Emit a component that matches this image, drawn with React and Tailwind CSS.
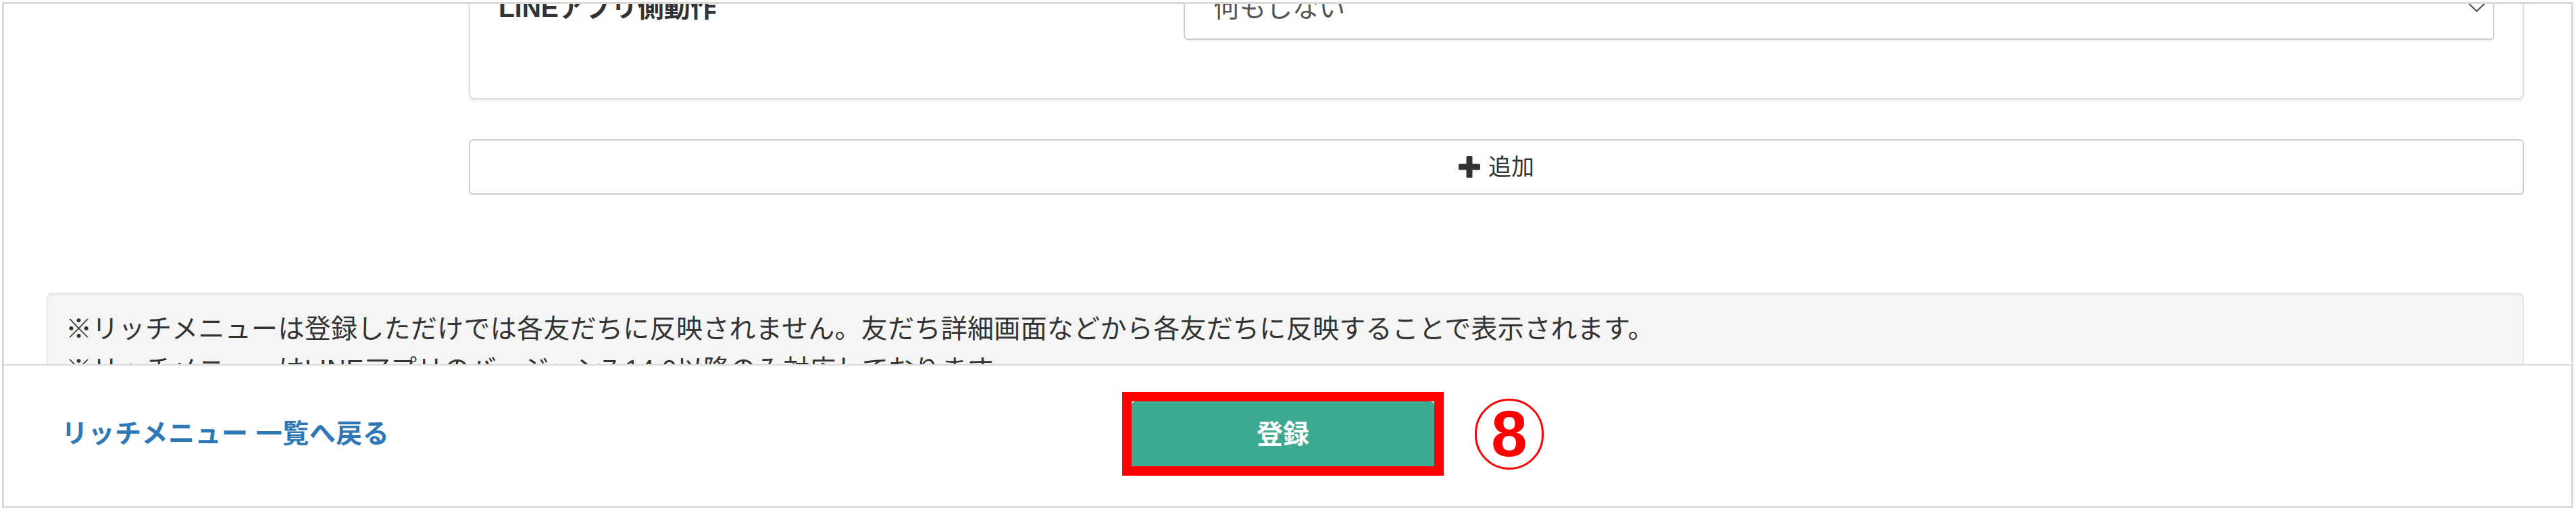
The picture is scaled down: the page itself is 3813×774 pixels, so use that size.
import React from "react";

function Chevron() {
  return (
    <svg width="26" height="14" viewBox="0 0 26 14" className="shrink-0">
      <polyline points="1,1 13,12.5 25,1" fill="none" stroke="#555" strokeWidth="2.2" />
    </svg>
  );
}

function PlusIcon() {
  return (
    <svg width="32" height="32" viewBox="0 0 32 32" className="shrink-0">
      <rect x="11.5" y="0" width="9" height="32" rx="1.5" fill="#333" />
      <rect x="0" y="11.5" width="32" height="9" rx="1.5" fill="#333" />
    </svg>
  );
}

export default function App() {
  return (
    <div className="w-[3813px] h-[774px] bg-white p-[3px] font-['Liberation_Sans','Noto_Sans_CJK_JP',sans-serif]">
      <div className="w-[3806px] h-[749px] border-[3px] border-[#dadada] flex flex-col overflow-hidden bg-white">
        {/* scrolled content */}
        <div className="h-[533px] shrink-0 overflow-hidden">
          <div className="mt-[-86px] pl-[63px] pr-[70px]">
            <div className="flex">
              <div className="w-[625px] shrink-0" />
              <div className="flex-1 flex flex-col">
                <div className="border-2 border-[#dddddd] rounded-[8px] shadow-[0_3px_4px_rgba(0,0,0,0.08)] pt-[41px] px-[42px] pb-[86px] bg-white">
                  <div className="flex items-center h-[96px]">
                    <div className="w-[1014px] shrink-0 text-[39px] leading-none font-bold text-[#333]">
                      LINEアプリ側動作
                    </div>
                    <div className="flex-1 h-[96px] border-2 border-[#cccccc] rounded-[6px] shadow-[0_2px_2px_rgba(0,0,0,0.06)] flex items-center justify-between pl-[42px] pr-[11px]">
                      <span className="text-[39px] leading-none text-[#555]">何もしない</span>
                      <Chevron />
                    </div>
                  </div>
                </div>
                <div className="mt-[59px] h-[82px] border-2 border-[#cccccc] rounded-[6px] bg-white flex items-center justify-center gap-[12px] shadow-[0_1px_1px_rgba(0,0,0,0.05)]">
                  <PlusIcon />
                  <span className="text-[34px] leading-none text-[#333]">追加</span>
                </div>
              </div>
            </div>
            <div className="mt-[145px] border border-[#e3e3e3] bg-[#f5f5f5] rounded-[8px] shadow-[inset_0_3px_3px_rgba(0,0,0,0.05)] pt-[23px] pl-[27px] pb-[23px] text-[39px] leading-[60px] tracking-[0.3px] text-[#333]">
              <p>※リッチメニューは登録しただけでは各友だちに反映されません。友だち詳細画面などから各友だちに反映することで表示されます。</p>
              <p>※リッチメニューはLINEアプリのバージョン7.14.0以降のみ対応しております。</p>
            </div>
          </div>
        </div>
        {/* footer */}
        <div className="h-[210px] shrink-0 border-t-2 border-[#dcdcdc] bg-white flex items-center pl-[85px] pb-[6px]">
          <div className="w-[1570px] shrink-0">
            <a className="text-[39px] leading-none font-bold tracking-[0.5px] text-[#2f78b7]">リッチメニュー 一覧へ戻る</a>
          </div>
          <div className="w-[476px] h-[124px] shrink-0 border-[14px] border-[#ff0000] bg-white">
            <div className="w-full h-full bg-[#3caa93] rounded-t-[6px] flex items-center justify-center">
              <span className="text-[39px] leading-none font-bold text-white">登録</span>
            </div>
          </div>
          <div className="ml-[46px] w-[102px] h-[105px] shrink-0 rounded-full border-[3px] border-[#ff0000] flex items-center justify-center">
            <span className="text-[96px] leading-none font-bold text-[#ff0000] font-['Liberation_Sans',sans-serif]">8</span>
          </div>
        </div>
      </div>
    </div>
  );
}
